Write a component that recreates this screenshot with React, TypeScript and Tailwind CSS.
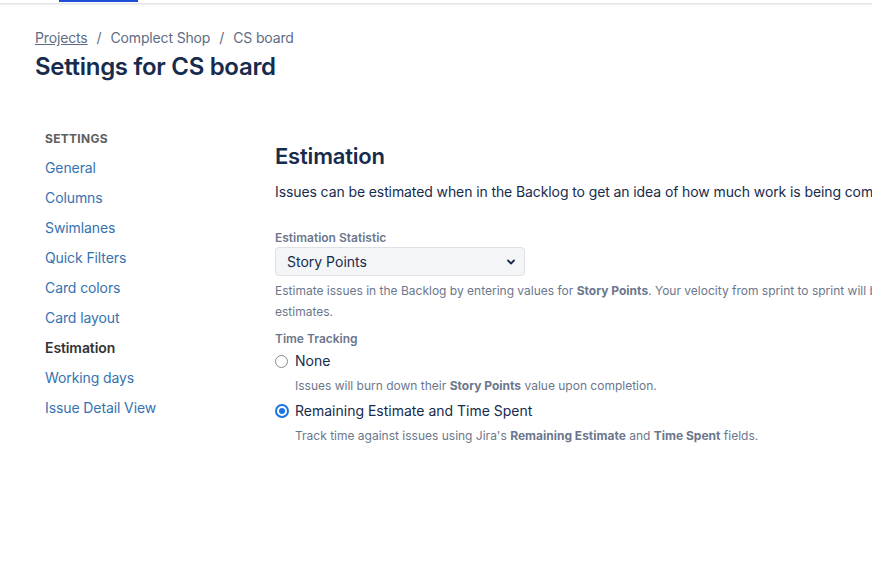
import React from 'react';

const font = { fontFamily: 'Inter, "Noto Sans", sans-serif' };

const navItems = [
  'General',
  'Columns',
  'Swimlanes',
  'Quick Filters',
  'Card colors',
  'Card layout',
  'Estimation',
  'Working days',
  'Issue Detail View',
];

function Radio({ checked }: { checked?: boolean }) {
  return checked ? (
    <span className="flex h-[14px] w-[14px] items-center justify-center rounded-full border-2 border-[#1a73e8] bg-white">
      <span className="h-[6px] w-[6px] rounded-full bg-[#1a73e8]" />
    </span>
  ) : (
    <span className="h-[13px] w-[13px] rounded-full border border-[#8a8a8a] bg-white" />
  );
}

export default function App() {
  return (
    <div className="h-[569px] w-[872px] overflow-hidden bg-white text-[#172b4d] antialiased" style={font}>
      {/* top nav strip */}
      <div className="relative h-[4px] border-b border-[#e4e6ea] shadow-[0_1px_2px_rgba(9,30,66,0.08)]">
        <div className="absolute left-[59px] top-0 h-[2px] w-[79px] bg-[#1d4ed8]" />
      </div>

      <div className="px-[35px] pt-[23px]">
        <div className="flex items-center gap-[9px] text-[14px] tracking-[-0.15px] text-[#5e6c84]">
          <span className="underline">Projects</span>
          <span>/</span>
          <span>Complect Shop</span>
          <span>/</span>
          <span>CS board</span>
        </div>
        <h1 className="mt-[5px] text-[24px] font-semibold leading-[28px] tracking-[-0.3px] text-[#172b4d]">Settings for CS board</h1>
      </div>

      <div className="mt-[44px] flex">
        <div className="w-[275px] shrink-0 pl-[45px] pt-[6px]">
          <div className="text-[12px] font-bold leading-[16px] tracking-[0.3px] text-[#5e5e5e]">SETTINGS</div>
          <ul className="mt-[6px] tracking-[-0.1px]">
            {navItems.map((item) => (
              <li
                key={item}
                className={
                  item === 'Estimation'
                    ? 'h-[30px] text-[14px] font-semibold leading-[30px] text-[#333333]'
                    : 'h-[30px] text-[14px] leading-[30px] text-[#3572b0]'
                }
              >
                {item}
              </li>
            ))}
          </ul>
        </div>

        <div className="w-[640px] shrink-0">
          <h2 className="mt-[17px] text-[22px] font-semibold leading-[28px] tracking-[-0.2px] text-[#172b4d]">Estimation</h2>
          <p className="mt-[12px] whitespace-nowrap text-[14px] leading-[20px] tracking-[-0.1px] text-[#172b4d]">
            Issues can be estimated when in the Backlog to get an idea of how much work is being committed to in a sprint.
          </p>

          <label className="mt-[28px] block text-[12px] font-semibold leading-[16px] text-[#6b778c]">Estimation Statistic</label>
          <div className="mt-[1px] flex h-[29px] w-[250px] items-center justify-between rounded-[4px] border border-[#dfe1e6] bg-[#f4f5f7] pl-[11px] pr-[8px]">
            <span className="text-[14px] text-[#172b4d]">Story Points</span>
            <svg width="10" height="10" viewBox="0 0 10 10" fill="none">
              <path d="M2 3.5 5 6.5 8 3.5" stroke="#172b4d" strokeWidth="1.8" strokeLinecap="round" strokeLinejoin="round" />
            </svg>
          </div>
          <p className="mt-[4px] text-[12px] leading-[21px] text-[#6b778c]">
            <span className="whitespace-nowrap">
              Estimate issues in the Backlog by entering values for <b>Story Points</b>. Your velocity from sprint to sprint will be
              calculated using these
            </span>
            <br />
            estimates.
          </p>

          <div className="mt-[9px] text-[12px] font-semibold leading-[16px] text-[#6b778c]">Time Tracking</div>
          <div className="mt-[4px] flex items-center gap-[7px]">
            <Radio />
            <span className="text-[14px] leading-[20px] text-[#172b4d]">None</span>
          </div>
          <p className="ml-[20px] mt-[7px] text-[12px] leading-[16px] text-[#6b778c]">
            Issues will burn down their <b>Story Points</b> value upon completion.
          </p>
          <div className="mt-[7px] flex items-center gap-[6px]">
            <Radio checked />
            <span className="text-[14px] leading-[20px] text-[#172b4d]">Remaining Estimate and Time Spent</span>
          </div>
          <p className="ml-[20px] mt-[7px] text-[12px] leading-[16px] text-[#6b778c]">
            Track time against issues using Jira's <b>Remaining Estimate</b> and <b>Time Spent</b> fields.
          </p>
        </div>
      </div>
    </div>
  );
}
